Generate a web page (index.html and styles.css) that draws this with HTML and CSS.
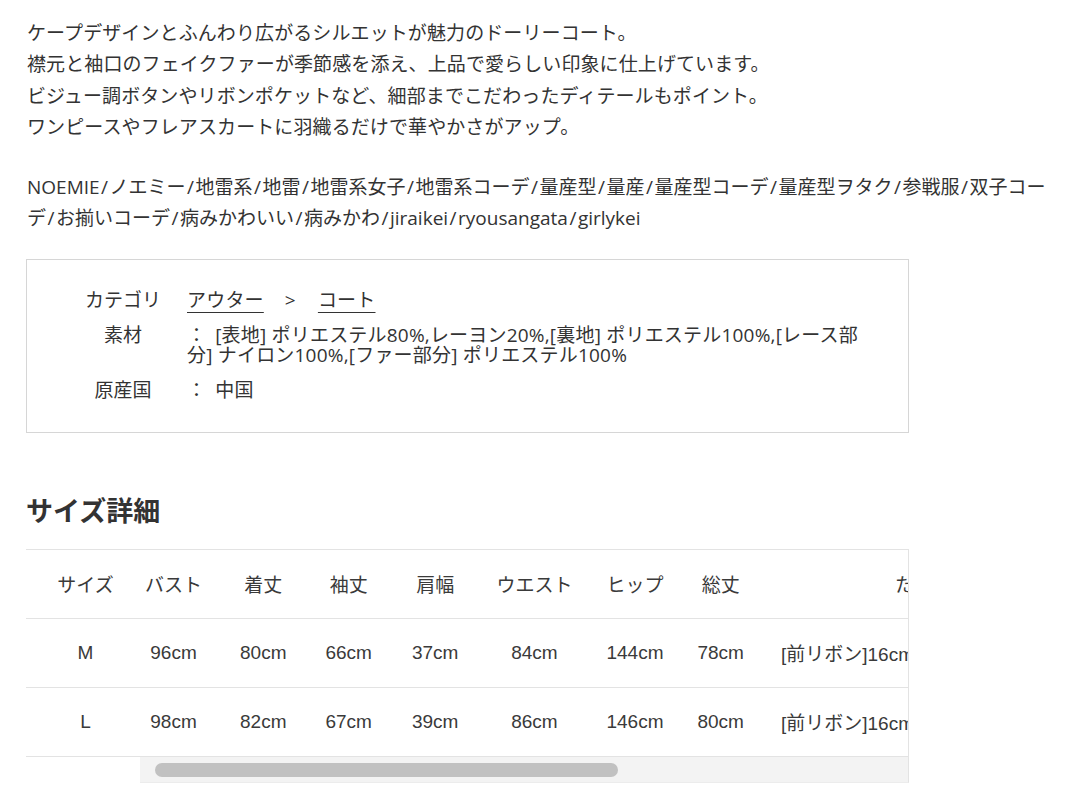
FILE: index.html
```html
<!DOCTYPE html>
<html lang="ja">
<head>
<meta charset="utf-8">
<title>商品詳細</title>
<link rel="stylesheet" href="styles.css">
</head>
<body>
<main class="page">
  <p class="desc">ケープデザインとふんわり広がるシルエットが魅力のドーリーコート。<br>襟元と袖口のフェイクファーが季節感を添え、上品で愛らしい印象に仕上げています。<br>ビジュー調ボタンやリボンポケットなど、細部までこだわったディテールもポイント。<br>ワンピースやフレアスカートに羽織るだけで華やかさがアップ。</p>
  <p class="tags">NOEMIE<span class="sl">/</span>ノエミー<span class="sl">/</span>地雷系<span class="sl">/</span>地雷<span class="sl">/</span>地雷系女子<span class="sl">/</span>地雷系コーデ<span class="sl">/</span>量産型<span class="sl">/</span>量産<span class="sl">/</span>量産型コーデ<span class="sl">/</span>量産型ヲタク<span class="sl">/</span>参戦服<span class="sl">/</span>双子コーデ<span class="sl">/</span>お揃いコーデ<span class="sl">/</span>病みかわいい<span class="sl">/</span>病みかわ<span class="sl">/</span>jiraikei<span class="sl">/</span>ryousangata<span class="sl">/</span>girlykei</p>

  <section class="spec">
    <div class="spec-label">カテゴリ</div>
    <div class="spec-value"><a class="crumb" href="#">アウター</a><span class="sep">&gt;</span><a class="crumb" href="#">コート</a></div>
    <div class="spec-label">素材</div>
    <div class="spec-value"><span class="colon">：</span>[表地] ポリエステル80%,レーヨン20%,[裏地] ポリエステル100%,[レース部分] ナイロン100%,[ファー部分] ポリエステル100%</div>
    <div class="spec-label">原産国</div>
    <div class="spec-value"><span class="colon">：</span>中国</div>
  </section>

  <h2 class="size-title">サイズ詳細</h2>

  <div class="size-wrap">
    <table class="size-fixed">
      <tr><th>サイズ</th></tr>
      <tr><td>M</td></tr>
      <tr><td>L</td></tr>
    </table>
    <div class="size-scroll">
      <table class="size-table">
        <tr><th>バスト</th><th>着丈</th><th>袖丈</th><th>肩幅</th><th>ウエスト</th><th>ヒップ</th><th>総丈</th><th>ただし書き</th></tr>
        <tr><td>96cm</td><td>80cm</td><td>66cm</td><td>37cm</td><td>84cm</td><td>144cm</td><td>78cm</td><td>[前リボン]16cm・[後ろリボン]約22cm</td></tr>
        <tr><td>98cm</td><td>82cm</td><td>67cm</td><td>39cm</td><td>86cm</td><td>146cm</td><td>80cm</td><td>[前リボン]16cm・[後ろリボン]約22cm</td></tr>
      </table>
      <div class="scrollbar"><div class="thumb"></div></div>
    </div>
  </div>
</main>
</body>
</html>
```

FILE: styles.css
```css
html, body {
  margin: 0;
  padding: 0;
  background: #ffffff;
}

body {
  font-family: "Open Sans", "Noto Sans CJK JP", sans-serif;
  font-size: 19px;
  color: #333333;
}

.page {
  padding: 18px 26px 0 26px;
}

.desc {
  margin: 0;
  line-height: 31.3px;
  padding-left: 1px;
  letter-spacing: 0.1px;
}

.tags {
  margin: 29px 0 0 0;
  line-height: 31.3px;
  padding-left: 1px;
}

.sl {
  padding: 0 1.5px;
}

.spec {
  box-sizing: border-box;
  width: 883px;
  margin-top: 24px;
  border: 1px solid #d6d6d6;
  padding: 30px 38px 32px 50px;
  display: grid;
  grid-template-columns: 92px 1fr;
  column-gap: 18px;
  row-gap: 15px;
  line-height: 20px;
  font-size: 19px;
}

.spec-label {
  text-align: center;
  white-space: nowrap;
}

.spec-value {
  color: #333333;
  letter-spacing: 0.2px;
}

.colon {
  display: inline-block;
  margin-right: 9px;
}

.crumb {
  color: #333333;
  text-decoration: underline;
  text-underline-offset: 5px;
  text-decoration-thickness: 1px;
}

.sep {
  display: inline-block;
  margin: 0 22px 0 21px;
}

.size-title {
  margin: 60px 0 20px 0;
  font-size: 27px;
  line-height: 36px;
  font-weight: 700;
  color: #333333;
}

.size-wrap {
  display: flex;
  align-items: flex-start;
  width: 883px;
  font-family: "Liberation Sans", "Noto Sans CJK JP", sans-serif;
  font-size: 19px;
  color: #3a3a3a;
}

.size-fixed,
.size-table {
  border-collapse: separate;
  border-spacing: 0;
  border-top: 1px solid #e3e3e3;
}

.size-fixed {
  width: 114px;
  flex: none;
}

.size-fixed th,
.size-fixed td,
.size-table th,
.size-table td {
  height: 68px;
  padding: 0;
  border-bottom: 1px solid #e3e3e3;
  text-align: center;
  font-weight: 400;
  white-space: nowrap;
}

.size-fixed th,
.size-fixed td {
  padding-left: 5px;
}

.size-fixed th,
.size-table th {
  font-family: "Noto Sans CJK JP", sans-serif;
}

.size-table th,
.size-table td {
  padding: 0 19px;
}

.size-table th:nth-child(1),
.size-table td:nth-child(1) {
  padding-left: 5px;
}

.size-table th:nth-child(3),
.size-table td:nth-child(3),
.size-table th:nth-child(4),
.size-table td:nth-child(4) {
  padding: 0 20px;
}

.size-table th:nth-child(5),
.size-table td:nth-child(5),
.size-table th:nth-child(7),
.size-table td:nth-child(7) {
  padding: 0 18px;
}

.size-table th:nth-child(6),
.size-table td:nth-child(6) {
  padding: 0 16px;
}

.size-scroll {
  flex: 1;
  min-width: 0;
  overflow: hidden;
  border-right: 1px solid #e3e3e3;
  border-bottom: 1px solid #ececec;
}

.scrollbar {
  height: 25px;
  background: #f3f3f3;
  padding: 6px 0 0 15px;
  box-sizing: border-box;
}

.thumb {
  width: 463px;
  height: 14px;
  border-radius: 7px;
  background: #c1c1c1;
}
```
